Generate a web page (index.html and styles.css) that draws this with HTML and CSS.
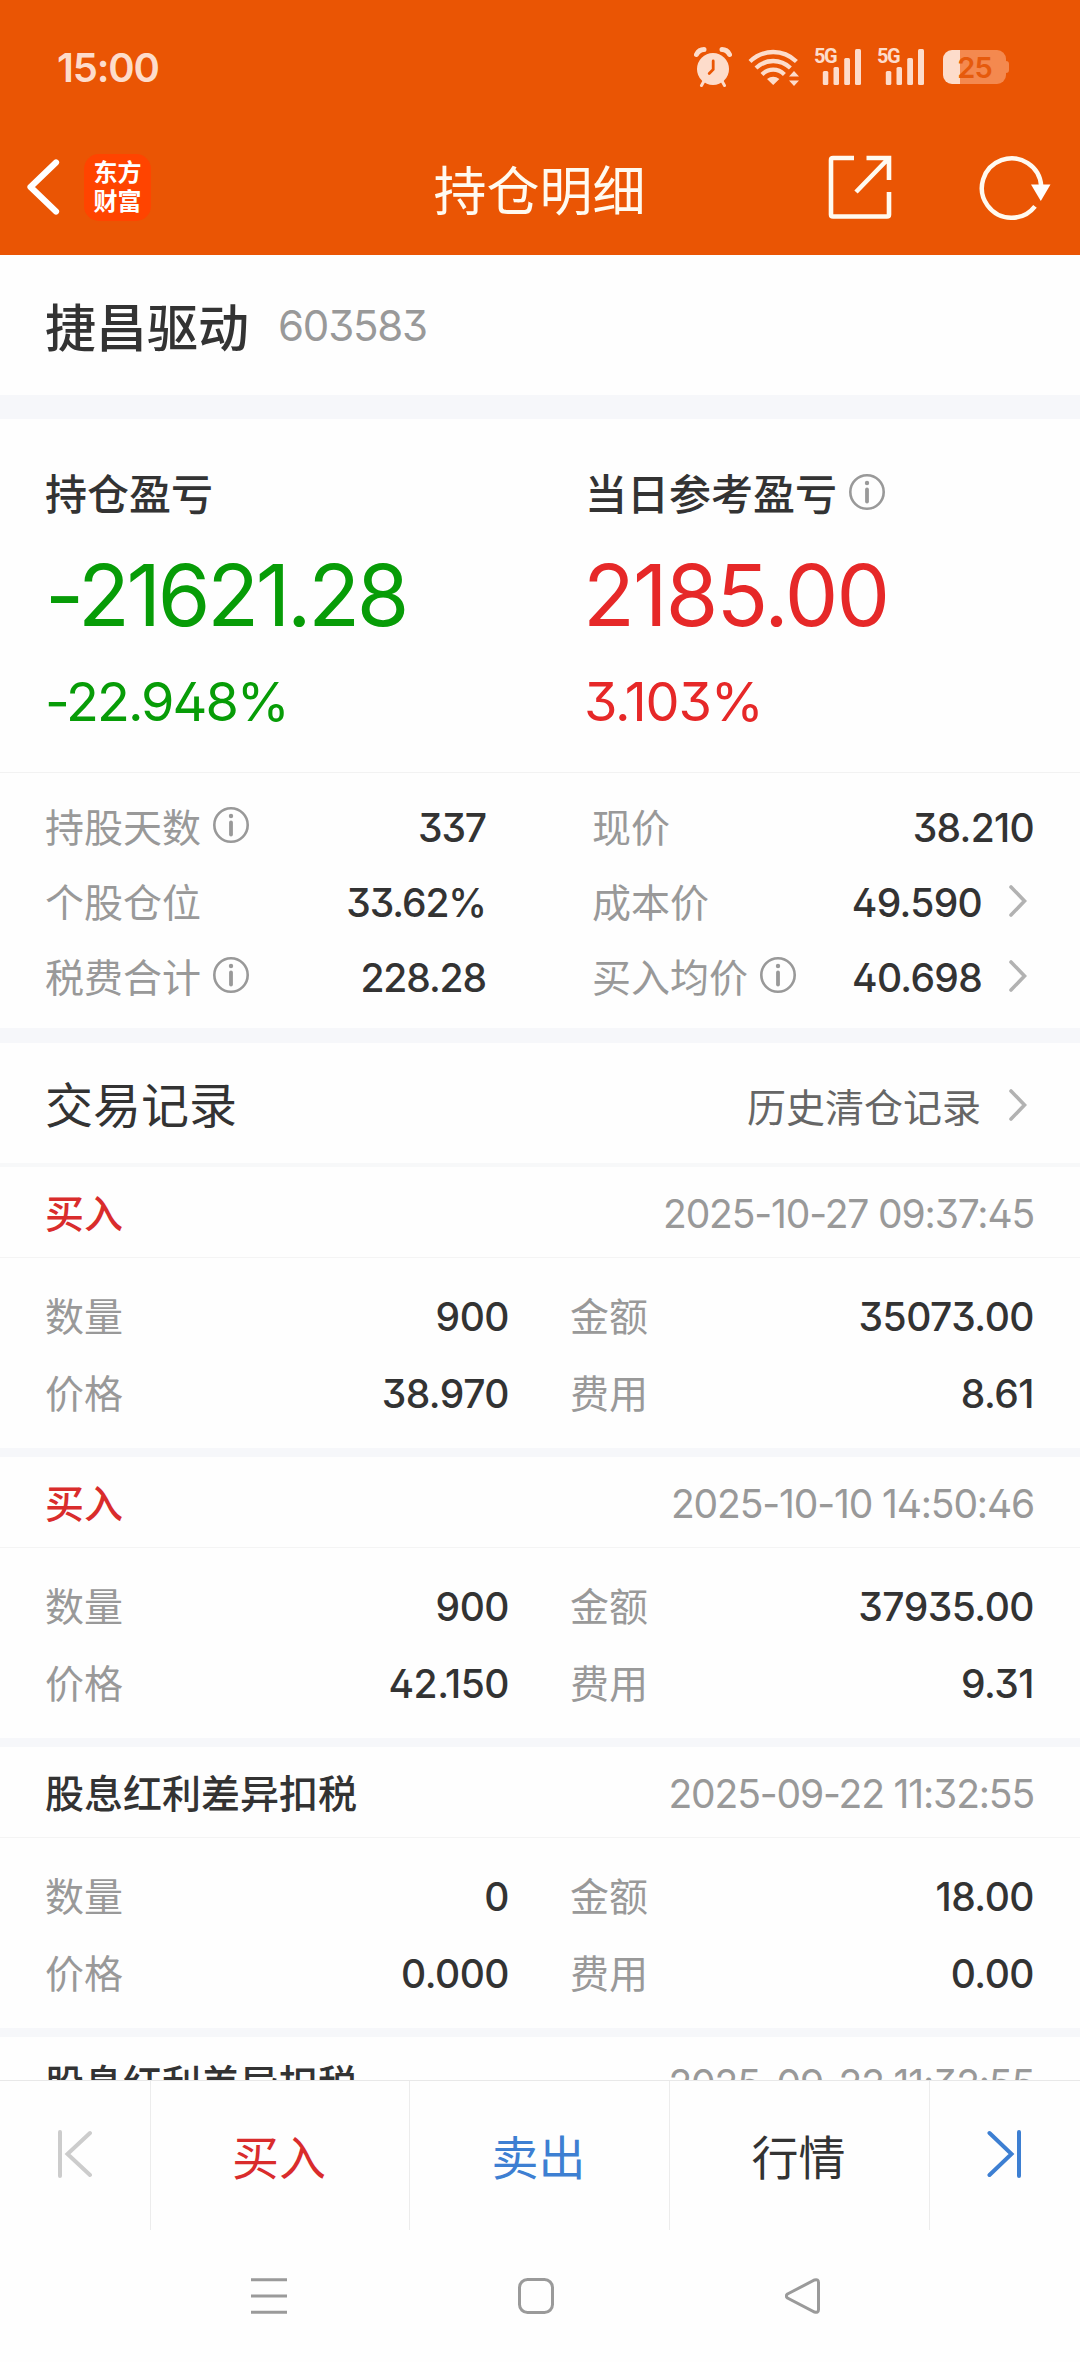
FILE: index.html
```html
<!DOCTYPE html>
<html lang="zh-CN">
  <head>
    <meta charset="utf-8" />
    <title>持仓明细</title>
    <link rel="stylesheet" href="styles.css">
  </head>

  <body>
    <svg class="defs">
      <symbol id="info" viewBox="0 0 36 36">
        <circle cx="18" cy="18" r="16.7" fill="none" stroke="currentColor" stroke-width="2.6" />
        <circle cx="18" cy="9" r="2.2" fill="currentColor" />
        <path d="M18 15.5V27.5" stroke="currentColor" stroke-width="3.8" stroke-linecap="round" />
      </symbol>
      <symbol id="chevron" viewBox="0 0 20 34">
        <path d="M3 3L16.5 17L3 31" fill="none" stroke="currentColor" stroke-width="3.6" stroke-linecap="round" />
      </symbol>
      <symbol id="signal" viewBox="0 0 40 36">
        <rect x="0.8" y="22" width="5.5" height="14" rx="1.5" />
        <rect x="11.5" y="18" width="5.5" height="18" rx="1.5" />
        <rect x="22.2" y="9" width="5.8" height="27" rx="1.5" />
        <rect x="33" y="0" width="6" height="36" rx="1.5" />
      </symbol>
    </svg>

    <div class="page">
      <header class="header">
        <div class="status">
          <span class="time">15:00</span>
          <svg class="alarm" viewBox="0 0 38 40" width="38" height="40">
            <circle cx="19" cy="22" r="16" fill="currentColor" />
            <path d="M2.5 7.5Q5 2.500 10 2.500M35.500 7.500Q33 2.500 28 2.500" fill="none" stroke="currentColor" stroke-width="5" stroke-linecap="round" />
            <path d="M10 34L7.500 38.500M28 34L30.500 38.500" stroke="currentColor" stroke-width="3" stroke-linecap="round" />
            <path d="M19.200 14V22.500L15.200 26.500" fill="none" stroke="#ea5504" stroke-width="2.800" stroke-linecap="round" />
          </svg>
          <svg class="wifi" viewBox="0 0 52 38" width="52" height="38">
            <g fill="none" stroke="currentColor" stroke-width="4.300">
              <path d="M2 13.500Q12 4 25.200 4T48.400 13.500" />
              <path d="M8 20Q15.500 13 25.200 13T42.400 20" />
              <path d="M14 26.500Q19 21.700 25.200 21.700T36.400 26.500" />
            </g>
            <path d="M19 31Q25.200 26.500 31.400 31L25.200 37ZM41 28.500L46 23L51 28.500ZM41 32.500L46 38L51 32.500Z" fill="currentColor" />
          </svg>
          <div class="mobile"><span class="net">5G</span><svg class="bars"><use href="#signal" /></svg></div>
          <div class="mobile"><span class="net">5G</span><svg class="bars"><use href="#signal" /></svg></div>
          <div class="battery"><span>25</span></div>
        </div>
        <nav class="navbar">
          <svg class="back" viewBox="0 0 34 60" width="34" height="60">
            <path d="M30 5.500L4.500 30L30 54.500" fill="none" stroke="#fff" stroke-width="6.200" stroke-linecap="round" stroke-linejoin="round" />
          </svg>
          <div class="logo">东方<br />财富</div>
          <h1 class="title">持仓明细</h1>
          <svg class="share" viewBox="0 0 64 64" width="64" height="64">
            <path d="M26 3H5Q3 3 3 5V59.500Q3 61.500 5 61.500H59Q61 61.500 61 59.500V37M38.500 3H61V25M60 4L28 37" fill="none" stroke="#fffaf0" stroke-width="4.600" />
          </svg>
          <svg class="refresh" viewBox="0 0 72 66" width="72" height="66">
            <path d="M56 52.300A29.700 29.700 0 1 1 62.200 32" fill="none" stroke="#fffaf0" stroke-width="4.500" />
            <path d="M52 30.500H71.500L61.800 47Z" fill="#fff" />
          </svg>
        </nav>
      </header>

      <section class="stock">
        <h2 class="stock-name">捷昌驱动</h2>
        <span class="stock-code">603583</span>
      </section>

      <section class="profit">
        <div class="profit-item green">
          <div class="profit-label">持仓盈亏</div>
          <div class="profit-value">-21621.28</div>
          <div class="profit-rate">-22.948%</div>
        </div>
        <div class="profit-item red">
          <div class="profit-label">当日参考盈亏<svg class="info"><use href="#info" /></svg></div>
          <div class="profit-value">2185.00</div>
          <div class="profit-rate">3.103%</div>
        </div>
      </section>

      <section class="details">
        <div class="col-left">
          <div class="row"><span class="label">持股天数<svg class="info"><use href="#info" /></svg></span><span class="value">337</span></div>
          <div class="row"><span class="label">个股仓位</span><span class="value">33.62%</span></div>
          <div class="row"><span class="label">税费合计<svg class="info"><use href="#info" /></svg></span><span class="value">228.28</span></div>
        </div>
        <div class="col-right">
          <div class="row"><span class="label">现价</span><span class="value">38.210</span></div>
          <div class="row"><span class="label">成本价</span><span class="value">49.590</span><svg class="chevron"><use href="#chevron" /></svg></div>
          <div class="row"><span class="label">买入均价<svg class="info"><use href="#info" /></svg></span><span class="value">40.698</span><svg class="chevron"><use href="#chevron" /></svg></div>
        </div>
      </section>

      <section class="records-head">
        <h3 class="records-title">交易记录</h3>
        <span class="history">历史清仓记录</span>
        <svg class="chevron"><use href="#chevron" /></svg>
      </section>

      <main class="records">
        <article class="record">
          <div class="record-head"><span class="type buy">买入</span><span class="date">2025-10-27 09:37:45</span></div>
          <div class="record-body">
            <div class="row"><span class="label">数量</span><span class="value">900</span></div>
            <div class="row"><span class="label">金额</span><span class="value">35073.00</span></div>
            <div class="row"><span class="label">价格</span><span class="value">38.970</span></div>
            <div class="row"><span class="label">费用</span><span class="value">8.61</span></div>
          </div>
        </article>
        <article class="record">
          <div class="record-head"><span class="type buy">买入</span><span class="date">2025-10-10 14:50:46</span></div>
          <div class="record-body">
            <div class="row"><span class="label">数量</span><span class="value">900</span></div>
            <div class="row"><span class="label">金额</span><span class="value">37935.00</span></div>
            <div class="row"><span class="label">价格</span><span class="value">42.150</span></div>
            <div class="row"><span class="label">费用</span><span class="value">9.31</span></div>
          </div>
        </article>
        <article class="record">
          <div class="record-head"><span class="type">股息红利差异扣税</span><span class="date">2025-09-22 11:32:55</span></div>
          <div class="record-body">
            <div class="row"><span class="label">数量</span><span class="value">0</span></div>
            <div class="row"><span class="label">金额</span><span class="value">18.00</span></div>
            <div class="row"><span class="label">价格</span><span class="value">0.000</span></div>
            <div class="row"><span class="label">费用</span><span class="value">0.00</span></div>
          </div>
        </article>
        <article class="record">
          <div class="record-head"><span class="type">股息红利差异扣税</span><span class="date">2025-09-22 11:32:55</span></div>
        </article>
      </main>

      <footer class="actions">
        <div class="action prev">
          <svg viewBox="0 0 36 48" width="36" height="48"><path d="M4 2V46M34 3L11.500 24L34 45" /></svg>
        </div>
        <div class="action buy">买入</div>
        <div class="action sell">卖出</div>
        <div class="action">行情</div>
        <div class="action next">
          <svg viewBox="0 0 36 48" width="36" height="48"><path d="M33 2V46M3.500 3L25.500 24L3.500 45" /></svg>
        </div>
      </footer>

      <div class="system-nav">
        <svg viewBox="0 0 36 36" width="36" height="36"><path d="M0 1.800H36M0 18H36M0 34.300H36" /></svg>
        <svg viewBox="0 0 36 36" width="36" height="36"><rect x="1.500" y="1.500" width="33" height="33" rx="8" /></svg>
        <svg viewBox="0 0 36 36" width="36" height="36"><path d="M2.500 16L29.500 2Q33.500 0.800 33.500 4.500V31.500Q33.500 35.200 29.500 34L2.500 20Q0 18 2.500 16Z" /></svg>
      </div>
    </div>
  </body>
</html>
```
FILE: styles.css
```css
* {
  box-sizing: border-box;
}

body {
  margin: 0;
  background-color: #fefefe;
  color: #333;
  font-family: Inter, "Noto Sans CJK SC", sans-serif;
  font-size: 39px;
  font-feature-settings: "cv09", "cv02";
}

h1,
h2,
h3 {
  margin: 0;
}

.defs {
  display: none;
}

.page {
  display: flex;
  flex-direction: column;
  width: 1080px;
  height: 2362px;
  overflow: hidden;
}

/* Header */
.header {
  height: 255px;
  background-color: #ea5504;
  flex: none;
}

.status {
  display: flex;
  align-items: center;
  height: 120px;
  padding: 14px 74px 0 57px;
  color: #fddccb;
}

.time {
  flex: 1;
  font-size: 40px;
  font-weight: 600;
  letter-spacing: -1.2px;
}

.wifi {
  margin-left: 16px;
}

.mobile {
  display: flex;
  position: relative;
  width: 48px;
  height: 36px;
  margin-left: 14px;
}

.mobile + .mobile {
  margin-left: 15px;
}

.net {
  position: absolute;
  left: 0;
  top: -3px;
  font: bold 20px/20px "Roboto", sans-serif;
  letter-spacing: -1.5px;
}

.bars {
  width: 40px;
  height: 36px;
  margin-left: 8px;
  fill: currentColor;
}

.battery {
  position: relative;
  width: 63px;
  height: 34px;
  margin-left: 18px;
  border-radius: 9px;
  background: linear-gradient(to right, #fddccb 17px, #f4894f 17px);
  color: #e65a0c;
  font-size: 29px;
  font-weight: 600;
  line-height: 35px;
  letter-spacing: -1px;
  text-align: center;
}

.battery::after {
  content: "";
  position: absolute;
  left: 63px;
  top: 11px;
  width: 3px;
  height: 12px;
  border-radius: 0 3px 3px 0;
  background-color: #f4894f;
}

.navbar {
  display: flex;
  align-items: center;
  height: 134px;
  padding: 0 29px 0 26px;
}

.logo {
  width: 67px;
  height: 67px;
  margin-left: 24px;
  padding-top: 4px;
  border-radius: 15px;
  background-color: #ff4400;
  color: #fff;
  font-size: 24px;
  font-weight: 700;
  line-height: 29px;
  text-align: center;
}

.title {
  flex: 1;
  padding-left: 100px;
  color: #fffaf0;
  font-size: 53px;
  font-weight: 400;
  line-height: 70px;
  text-align: center;
  margin-top: 9px;
}

.share {
  margin-right: 87px;
}

/* Stock */
.stock {
  display: flex;
  align-items: center;
  flex: none;
  height: 164px;
  padding-left: 45px;
  border-bottom: 24px solid #f6f7fa;
}

.stock-name {
  font-size: 51px;
  font-weight: 500;
}

.stock-code {
  margin-left: 29px;
  color: #999;
  font-size: 42px;
  letter-spacing: -1.2px;
}

/* Profit */
.profit {
  display: flex;
  flex: none;
  height: 354px;
  padding: 46px 45px 0;
  border-bottom: 1px solid #f2f2f2;
}

.profit-item {
  width: 540px;
  flex: none;
}

.profit-label {
  display: flex;
  align-items: center;
  height: 58px;
  padding-bottom: 5px;
  color: #333;
  font-size: 42px;
  font-weight: 500;
}

.profit-value {
  height: 146px;
  font-size: 85px;
  line-height: 146px;
  letter-spacing: -3.3px;
}

.profit-rate {
  height: 66px;
  font-size: 54px;
  line-height: 66px;
  letter-spacing: -2px;
}

.green {
  color: #079c07;
}

.red {
  color: #e62828;
}

.red .profit-value {
  margin-left: -2px;
  letter-spacing: -1.8px;
}

.red .profit-rate {
  margin-left: -1px;
  letter-spacing: -1.2px;
}

.info {
  width: 36px;
  height: 36px;
  margin: 0 0 0 12px;
  color: #999;
}

.chevron {
  width: 20px;
  height: 34px;
  margin: -4px 7px 0 25px;
  color: #b2b2b2;
}

/* Details */
.row {
  display: flex;
  align-items: center;
  height: 75px;
}

.label {
  display: flex;
  align-items: center;
  flex: 1;
  padding-bottom: 5px;
  color: #999;
}

.value {
  font-weight: 500;
  letter-spacing: -1.1px;
}

.details {
  display: flex;
  justify-content: space-between;
  flex: none;
  height: 270px;
  padding: 17px 45px 0;
  border-bottom: 15px solid #f6f7fa;
}

.col-left {
  width: 441px;
}

.col-right {
  width: 443px;
}

.col-right .value {
  margin-right: 1px;
  letter-spacing: -0.7px;
}

/* Records */
.records-head {
  display: flex;
  align-items: center;
  flex: none;
  height: 124px;
  padding: 4px 45px 0;
  border-bottom: 4px solid #f7f8f9;
}

.records-title {
  flex: 1;
  padding-bottom: 6px;
  font-size: 48px;
  font-weight: 400;
}

.history {
  color: #666;
}

.records-head .chevron {
  margin-top: 0;
  margin-left: 27px;
}

.records {
  flex: 1;
  overflow: hidden;
}

.record {
  border-bottom: 9px solid #f6f7fa;
}

.record-head {
  display: flex;
  align-items: center;
  justify-content: space-between;
  height: 91px;
  padding: 2px 45px 0;
  border-bottom: 1px solid #f4f4f4;
}

.type {
  padding-bottom: 5px;
  font-weight: 500;
}

.date {
  margin-right: 1px;
  color: #999;
  letter-spacing: -1.15px;
}

.record-body {
  display: grid;
  grid-template-columns: 465px 465px;
  column-gap: 60px;
  align-content: start;
  height: 190px;
  padding: 20px 45px 0;
}

.record-body .row {
  height: 77px;
}

.record-body .value {
  margin-right: 1px;
  letter-spacing: -0.5px;
}

.buy {
  color: #d92c2c;
}

.sell {
  color: #3d7fd2;
}

/* Bottom bar */
.actions {
  display: grid;
  grid-template-columns: 150px 259px 260px 260px 151px;
  flex: none;
  height: 150px;
  border-top: 1px solid #e8e8e8;
}

.action {
  display: flex;
  align-items: center;
  justify-content: center;
  padding: 0 2px 3px 0;
  border-left: 1px solid #ececec;
  font-size: 47px;
}

.action svg {
  margin-top: -1px;
  fill: none;
  stroke: currentColor;
  stroke-width: 4;
  stroke-linecap: round;
}

.prev {
  border-left: none;
  color: #ccc;
}

.next {
  color: #3d7fd2;
}

.system-nav {
  display: flex;
  justify-content: center;
  gap: 231px;
  flex: none;
  height: 132px;
  padding: 48px 9px 0 0;
}

.system-nav svg {
  fill: none;
  stroke: #9a9a9a;
  stroke-width: 3;
}
```
